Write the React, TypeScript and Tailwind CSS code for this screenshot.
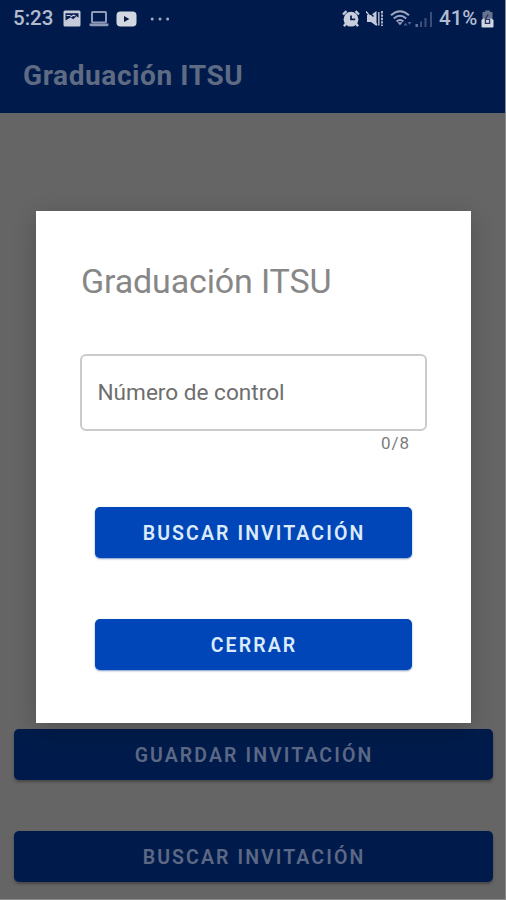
import type { ReactNode } from "react";

function ImageIcon() {
  return (
    <svg width="18" height="17" viewBox="0 0 18 17">
      <rect x="0.5" y="0.5" width="17" height="16" rx="1.5" fill="#c6cbdc" />
      <path d="M2.5 3.2h13v4.6l-2-1.6-3.2 3-2.8-1.8-5 3.2z" fill="#0a1f52" />
      <path d="M3.5 5.5h4M7.5 7l3-1.8 2 .8" stroke="#c6cbdc" strokeWidth="1.2" fill="none" />
    </svg>
  );
}

function LaptopIcon() {
  return (
    <svg width="20" height="16" viewBox="0 0 20 16">
      <rect x="3" y="1" width="14" height="10.5" rx="0.8" fill="none" stroke="#8f99b8" strokeWidth="2" />
      <path d="M0.5 12.5h19v1.2q0 1.6-1.6 1.6H2.1q-1.6 0-1.6-1.6z" fill="#8f99b8" />
    </svg>
  );
}

function VideoIcon() {
  return (
    <svg width="21" height="16" viewBox="0 0 21 16">
      <rect x="0.5" y="0.5" width="20" height="15" rx="4" fill="#d3d7e2" />
      <path d="M8 5l5.4 3L8 11z" fill="#0a1a42" />
    </svg>
  );
}

function DotsIcon() {
  return (
    <svg width="20" height="4" viewBox="0 0 20 4" fill="#a3abc4">
      <circle cx="2.2" cy="2" r="1.5" />
      <circle cx="10" cy="2" r="1.5" />
      <circle cx="17.6" cy="2" r="1.5" />
    </svg>
  );
}

function AlarmIcon() {
  return (
    <svg width="18" height="18" viewBox="0 0 18 18">
      <path d="M1 4.5L4.5 1.2M17 4.5L13.5 1.2M4 13.5l-2 2.8M14 13.5l2 2.8" stroke="#c3c9da" strokeWidth="2.4" />
      <circle cx="9" cy="9.2" r="7.4" fill="#c9cedd" />
      <path d="M9 5.4v4h4.2" stroke="#0c2050" strokeWidth="1.8" fill="none" />
    </svg>
  );
}

function MuteIcon() {
  return (
    <svg width="18" height="17" viewBox="0 0 18 17">
      <path d="M1 5h4l5.5-4v15L5 12H1z" fill="#c3c9da" />
      <path d="M1.5 0.5l6 6" stroke="#011a4a" strokeWidth="1.4" />
      <path d="M0 1.5l11 13.5" stroke="#c3c9da" strokeWidth="1.4" />
      <path d="M12.8 2v13.5" stroke="#aab2ca" strokeWidth="1.5" />
      <path d="M16 1v15" stroke="#aab2ca" strokeWidth="2" strokeDasharray="2.4 1" />
    </svg>
  );
}

function WifiIcon() {
  return (
    <svg width="23" height="18" viewBox="0 0 23 18">
      <g fill="none" stroke="#9ca6c2" strokeWidth="2">
        <path d="M1 5.2q9-8 18 0" />
        <path d="M3.8 8.4q6.2-5.4 12.4 0" />
        <path d="M6.6 11.4q3.4-2.8 6.8 0" />
      </g>
      <path d="M7.4 12.2h5.2L10 15.2z" fill="#9ca6c2" />
      <path d="M13.5 15.4l2-2.6 2 2.6z" fill="#4f618c" />
      <path d="M17.5 12l2 2.8 2-2.8z" fill="#4f618c" />
    </svg>
  );
}

function SignalIcon() {
  return (
    <svg width="18" height="17" viewBox="0 0 18 17">
      <path d="M0.5 14h2.5v3H0.5z" fill="#66749a" />
      <path d="M5 11.5h2V17H5zM9.5 8h2v9h-2zM15 2h2v15h-2z" fill="#3c4e7a" />
    </svg>
  );
}

function BatteryIcon() {
  return (
    <svg width="13" height="18" viewBox="0 0 13 18">
      <path d="M4 0.5h5V2h2.5v7h-10V2H4z" fill="#66738f" />
      <path d="M0.5 10l2-1.5h8l2 1.5v6.5q0 1-1 1h-10q-1 0-1-1z" fill="#d2d6e2" />
      <path d="M7.2 4.5L4.4 9v4.3h4.2V9.4H4.4" fill="none" stroke="#22345f" strokeWidth="1.3" />
    </svg>
  );
}

function StatusBar() {
  return (
    <div className="flex h-[37px] items-center pl-[13px] pr-[11px] text-[20.5px] font-medium leading-none text-[#b4bbcf]">
      <span className="w-[50px]">5:23</span>
      <ImageIcon />
      <span className="ml-[8px]"><LaptopIcon /></span>
      <span className="ml-[7px]"><VideoIcon /></span>
      <span className="ml-[13px]"><DotsIcon /></span>
      <div className="ml-auto flex items-center">
        <AlarmIcon />
        <span className="ml-[6px]"><MuteIcon /></span>
        <span className="ml-[6px]"><WifiIcon /></span>
        <span className="ml-[2px]"><SignalIcon /></span>
        <span className="ml-[6px] w-[42px] whitespace-nowrap">41%</span>
        <BatteryIcon />
      </div>
    </div>
  );
}

function PageButton({ children }: { children: ReactNode }) {
  return (
    <button className="h-[51px] w-full rounded-[5px] bg-[#001b4b] pl-px pt-[3px] text-[19.5px] font-semibold tracking-[2.1px] text-[#5c6884] shadow-[0_2px_3px_rgba(0,0,0,0.3)]">
      {children}
    </button>
  );
}

function DialogButton({ children }: { children: ReactNode }) {
  return (
    <button className="h-[51px] w-full rounded-[5px] bg-[#0046b8] pl-px pt-[2px] text-[19.5px] font-semibold tracking-[2.1px] text-[#dcebfb] shadow-[0_1px_2px_rgba(0,50,140,0.5)]">
      {children}
    </button>
  );
}

export default function App() {
  return (
    <div className="relative flex h-[900px] w-[506px] flex-col overflow-hidden border-b border-r border-[#8b8b8b] bg-[#656565] font-[Roboto,sans-serif]">
      <header className="h-[113px] shrink-0 bg-[#001b4b]">
        <StatusBar />
        <h1 className="mt-[21px] pl-[23px] text-[28px] font-bold leading-[36px] tracking-[0.6px] text-[#5f6b82]">
          Graduación ITSU
        </h1>
      </header>

      <main className="flex flex-1 flex-col justify-end gap-[51px] pb-[17px] pl-[14px] pr-[12px]">
        <PageButton>GUARDAR INVITACIÓN</PageButton>
        <PageButton>BUSCAR INVITACIÓN</PageButton>
      </main>

      {/* Search dialog */}
      <div className="absolute left-[36px] top-[211px] flex h-[512px] w-[435px] flex-col bg-white px-[44px] pt-[50px] shadow-[0_6px_22px_rgba(0,0,0,0.2)]">
        <h2 className="pl-px text-[34px] leading-[40px] tracking-[-0.15px] text-[#878787]">Graduación ITSU</h2>
        <div className="mt-[53px] flex h-[77px] items-center rounded-[6px] border-2 border-[#cbcbcb] px-[15.5px] text-[22.6px] text-[#6e6e6e]">
          Número de control
        </div>
        <div className="mt-[2px] pr-[17px] text-right text-[17px] leading-[20px] tracking-[1px] text-[#7c7c7c]">
          0/8
        </div>
        <div className="mt-[54px] flex flex-col gap-[61px] px-[15px]">
          <DialogButton>BUSCAR INVITACIÓN</DialogButton>
          <DialogButton>CERRAR</DialogButton>
        </div>
      </div>
    </div>
  );
}
